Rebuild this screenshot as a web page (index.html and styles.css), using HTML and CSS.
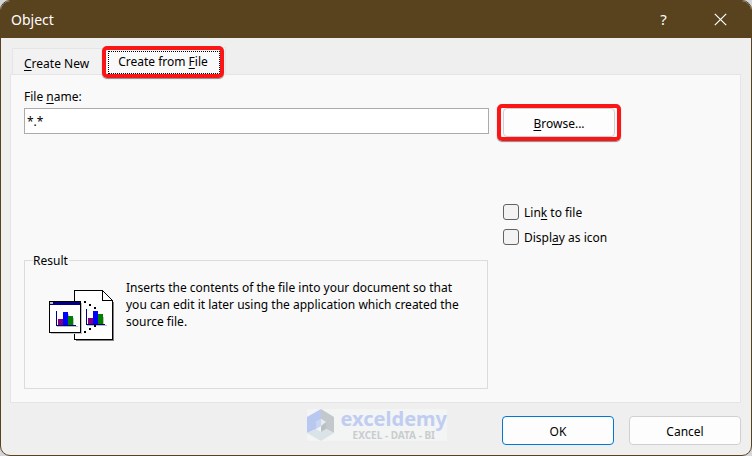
FILE: index.html
```html
<!DOCTYPE html>
<html lang="en">
<head>
<meta charset="utf-8">
<title>Object</title>
<meta name="viewport" content="width=device-width, initial-scale=1">
<link rel="stylesheet" href="styles.css">
</head>
<body>
<main class="dialog">
  <header class="titlebar">
    <h1 class="title">Object</h1>
    <button class="caption-button" type="button" aria-label="Help"><span class="help">?</span></button>
    <button class="caption-button" type="button" aria-label="Close">
      <svg width="13" height="13" viewBox="0 0 13 13"><path d="M.8.8 12.2 12.2M12.2.8.8 12.2" stroke="#fff" stroke-width="1.2" fill="none"/></svg>
    </button>
  </header>
  <form class="content">
    <div class="tabs" role="tablist">
      <button class="tab" type="button" role="tab" aria-selected="false"><span><u>C</u>reate New</span></button>
      <button class="tab tab-active marked" type="button" role="tab" aria-selected="true"><span>Create from <u>F</u>ile</span></button>
    </div>
    <section class="panel" role="tabpanel">
      <div class="left">
        <label class="label" for="file">File <u>n</u>ame:</label>
        <input class="field" id="file" type="text" value="*.*">
        <fieldset class="result">
          <legend>Result</legend>
          <div class="result-body">
            <svg class="picture" width="66" height="52" viewBox="0 0 66 52" shape-rendering="crispEdges" aria-hidden="true">
              <path fill="#808080" d="M27 2h27l11 10v39H27z"/>
              <path fill="#000" d="M25 0h29v1h1v1h1v1h1v1h1v1h1v1h1v1h1v1h1v1h1v1h1v40H25z"/>
              <path fill="#fff" d="M26 1h27v10h10v38H26z"/>
              <path fill="#fff" d="M54 2v8h8z"/>
              <path fill="#c0c0c0" d="M2 13h31v31H2z"/>
              <path fill="#000" d="M0 11h32v32H0z"/>
              <path fill="#fff" d="M1 15h30v27H1z"/>
              <path fill="#000080" d="M1 12h30v3H1z"/>
              <path fill="#c0c0c0" d="M1 12h3v2H1z"/>
              <path fill="#c0c0c0" d="M8 36h21v1H8zM14 30h1v5h-1zM19 24h1v11h-1zM24 28h1v7h-1z"/>
              <path fill="#800080" d="M9 29h5v6H9z"/><path fill="#00f" d="M14 22h5v13h-5z"/><path fill="#008000" d="M19 26h5v9h-5z"/>
              <path fill="#000080" d="M7 21h1v14h19v1H7z"/>
              <path fill="#c0c0c0" d="M38 35h20v1H38zM54 27h1v7h-1z"/>
              <path fill="#800080" d="M39 28h5v6h-5z"/><path fill="#00f" d="M44 21h5v13h-5z"/><path fill="#008000" d="M49 24h5v10h-5z"/>
              <path fill="#000080" d="M37 19h1v15h18v1H37z"/>
              <path fill="#000" d="M35 11h2v2h-2zM40 14h2v2h-2zM45 17h2v2h-2zM45 35h2v2h-2zM40 38h2v2h-2zM35 41h2v2h-2z"/>
            </svg>
            <p class="description">Inserts the contents of the file into your document so that you can edit it later using the application which created the source file.</p>
          </div>
        </fieldset>
      </div>
      <div class="right">
        <div class="browse marked"><button class="button" type="button"><span><u>B</u>rowse...</span></button></div>
        <div class="options">
          <label class="option"><input type="checkbox"><span>Lin<u>k</u> to file</span></label>
          <label class="option"><input type="checkbox"><span>Displ<u>a</u>y as icon</span></label>
        </div>
      </div>
    </section>
    <footer class="footer">
      <div class="brand">
        <svg width="28" height="32" viewBox="0 0 28 32" aria-hidden="true">
          <path fill="#b8c8f0" d="M14 0v10l-5 3v7L0 24V8z"/>
          <path fill="#c2c8cc" d="M14 0l13 8v16l-8-4v-7l-5-3z"/>
          <path fill="#dae3e8" d="M0 24l9-4 5 3 5-3 8 4-13 8z"/>
          <path fill="#c8d5f3" d="M9 13l5-3v7l-5 3z"/>
          <path fill="#e8eced" d="M14 10l5 3-5 4z"/>
          <path fill="#b9c1c7" d="M14 17l5-4v7l-5 3z"/>
        </svg>
        <div class="brand-text"><span class="brand-name">exceldemy</span><span class="brand-sub">EXCEL - DATA - BI</span></div>
      </div>
      <button class="button button-default" type="submit">OK</button>
      <button class="button" type="button">Cancel</button>
    </footer>
  </form>
</main>
</body>
</html>
```
FILE: styles.css
```css
* { box-sizing: border-box; }

body {
  margin: 0;
  background: #d5d6da;
  color: #000;
  font: 12px/17px "Noto Sans", "Open Sans", sans-serif;
}

button, input { font: inherit; color: inherit; }
u { text-underline-offset: 2px; text-decoration-thickness: 1px; text-decoration-skip-ink: none; }

.dialog {
  display: flex;
  flex-direction: column;
  min-height: 100vh;
  border: 1px solid #59431f;
  border-radius: 10px;
  background: #efefef;
  overflow: hidden;
}

.titlebar {
  display: flex;
  align-items: center;
  height: 37px;
  padding: 0 2px 0 10px;
  background: #59431f;
  color: #fff;
}
.title { flex: 1; margin: 0; font-size: 14px; font-weight: 400; }
.caption-button {
  display: flex;
  align-items: center;
  justify-content: center;
  width: 57px;
  height: 37px;
  padding: 0;
  border: 0;
  background: none;
}
.help { font-size: 15px; }

.content { display: flex; flex: 1; flex-direction: column; padding: 9px 10px 10px 9px; }

.tabs { display: flex; align-items: flex-end; padding-left: 2px; }
.tab {
  height: 26px;
  padding: 3px 13px 0 11px;
  border: 1px solid #e5e5e5;
  border-bottom: 0;
  background: #f2f2f2;
}
.tab-active {
  position: relative;
  z-index: 1;
  height: 28px;
  margin-bottom: -1px;
  padding: 0 17px 0 14px;
  background: #f9f9f9;
}
.tab-active::before {
  content: "";
  position: absolute;
  inset: 3px 5px 1px 4px;
  border: 1px dotted #000;
}
.marked { position: relative; }
.marked::after {
  content: "";
  position: absolute;
  inset: 0;
  border: 4px solid #fa1616;
  border-radius: 5px;
  box-shadow: 0 1px 1px #888;
  pointer-events: none;
}
.tab.marked::after { inset: -2px 1px -3px -2px; }

.panel {
  display: flex;
  flex: 1;
  gap: 8px;
  padding: 13px;
  border: 1px solid #e5e5e5;
  background: #f9f9f9;
}
.left { display: flex; flex: 1; flex-direction: column; }
.label { padding-bottom: 3px; }
.field {
  height: 26px;
  padding: 0 2px;
  border: 1px solid #ababab;
  background: #fff;
}
.result {
  flex: 1;
  margin: 118px 1px 0 0;
  padding: 0 8px;
  border: 1px solid #dcdcdc;
}
.result legend { padding: 0 1px 0 0; }
.result-body { display: flex; gap: 11px; padding: 10px 8px 0 16px; }
.picture { flex: none; margin-top: 11px; }
.description { margin: 0; }

.right { flex: 0 0 230px; padding-top: 16px; }
.browse { width: 124px; padding: 4px 6px; }
.button {
  width: 112px;
  height: 29px;
  padding: 2px 0 0;
  border: 1px solid #d0d0d0;
  border-radius: 4px;
  background: #fdfdfd;
}
.browse .button { display: block; }
.options { display: grid; gap: 8px; padding: 63px 0 0 6px; }
.option { display: flex; align-items: flex-start; gap: 5px; }
.option input {
  appearance: none;
  width: 16px;
  height: 16px;
  margin: 0;
  border: 1px solid #626262;
  border-radius: 3px;
  background: #f3f3f3;
}

.footer { display: flex; align-items: flex-end; justify-content: flex-end; gap: 15px; padding-top: 6px; }
.button-default { border-color: #0078d4; }
.brand { display: flex; align-items: center; gap: 6px; margin: 0 40px 4px 0; background: #f3f4f4; }
.brand-text { display: flex; flex-direction: column; align-items: center; font-weight: 700; }
.brand-name { color: #c0cdf1; font-size: 20px; line-height: 20px; }
.brand-sub { color: #c9cccf; font-size: 10px; line-height: 12px; }
```
